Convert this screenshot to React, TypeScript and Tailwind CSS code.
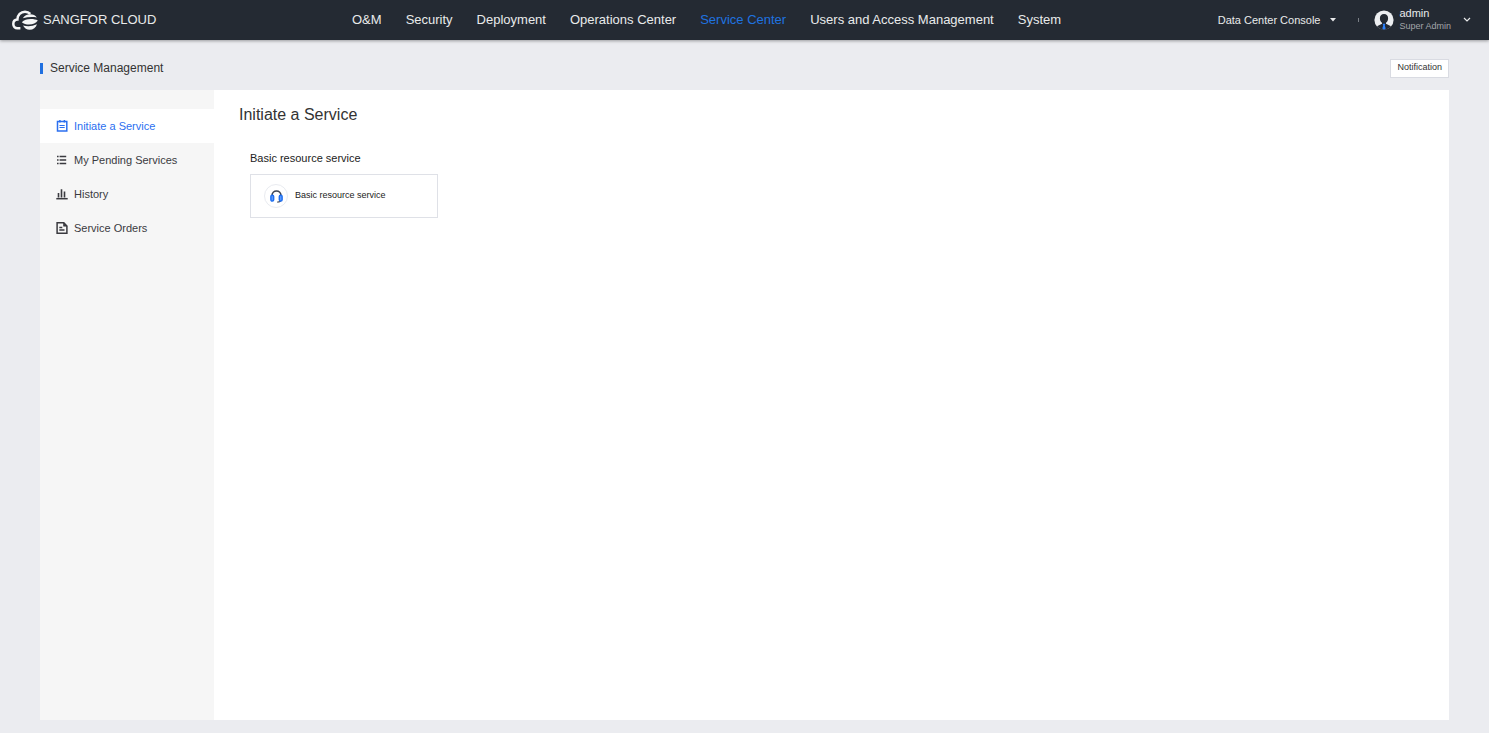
import { useState } from "react";
import type { ReactNode } from "react";
import clsx from "clsx";

const NAV_ITEMS = [
  "O&M",
  "Security",
  "Deployment",
  "Operations Center",
  "Service Center",
  "Users and Access Management",
  "System",
];

function CloudLogo() {
  return (
    <svg viewBox="0 0 26 20" className="h-5 w-[26px] shrink-0" fill="none">
      <path
        d="M8.400 18.200H5.400C3 18.200 1.300 16.500 1.300 14c0-2.400 1.600-4.200 4.100-4.400C5.400 4.900 8.800 1.700 13 1.700c2.200 0 4 .8 5.300 2.200"
        stroke="#f4f5f6"
        strokeWidth="2.500"
      />
      <path d="M10.800 8.300C12.400 5.700 15 4.300 18.200 4.300c2.900 0 5.200 1.100 6.600 3.100-4.500-.8-9.200-.5-14 .9Z" fill="#f4f5f6" />
      <path d="M9.800 12.200c2.200-2.200 5-3.200 9-3.200 3 0 5.300.5 7 1.500-1.800 2.600-4.800 4.100-8.800 4.100-2.900 0-5.300-.8-7.200-2.400Z" fill="#f4f5f6" />
      <path d="M11 15.500c4.500 1.200 9.300.9 14-1.200-1 3.500-3.800 5.500-7.400 5.500-2.800 0-5.100-1.500-6.600-4.300Z" fill="#f4f5f6" />
    </svg>
  );
}

function Avatar() {
  return (
    <svg viewBox="0 0 20 20" className="h-5 w-5 shrink-0">
      <circle cx="10" cy="10" r="9.600" fill="#eceef1" />
      <path
        d="M10 4C7.400 4 5.900 5.700 5.900 8.200c0 2 .8 3.600 2.100 4.500v1L3 16.200C4.700 18.300 7.200 19.700 10 19.700s5.300-1.400 7-3.500l-5-2.500v-1c1.300-.9 2.100-2.500 2.100-4.500C14.100 5.700 12.600 4 10 4Z"
        fill="#242a33"
      />
      <path d="M8.600 13.800h2.800l-.6 1.600.9 3-1.700 1.300-1.700-1.300.9-3Z" fill="#2b82ff" />
    </svg>
  );
}

function NoteIcon() {
  return (
    <svg viewBox="0 0 12 12" className="h-3 w-3" fill="none" stroke="currentColor">
      <path d="M1.500 1.500h9.300v9.600H1.500Z" strokeWidth="1.500" />
      <path d="M3.900 0v2.400M8.400 0v2.400" strokeWidth="1.500" />
      <path d="M3.500 5.500h5.200M3.500 7.500h5.200" strokeWidth="1.200" />
    </svg>
  );
}

function ListIcon() {
  return (
    <svg viewBox="0 0 12 12" className="h-3 w-3" fill="none" stroke="currentColor" strokeWidth="1.600">
      <path d="M1 2.500h1.600M1 6h1.600M1 9.500h1.600M3.600 2.500h6.600M3.600 6h6.600M3.600 9.500h6.600" />
    </svg>
  );
}

function ChartIcon() {
  return (
    <svg viewBox="0 0 12 12" className="h-3 w-3" fill="none" stroke="currentColor">
      <path d="M.3 10.700h11.400" strokeWidth="1.500" />
      <path d="M2.500 5v4.500M5.500 1.300v8.200M8.500 3.500v6" strokeWidth="1.600" />
    </svg>
  );
}

function OrderIcon() {
  return (
    <svg viewBox="0 0 12 12" className="h-3 w-3" fill="none" stroke="currentColor">
      <path d="M1.100.8h6.700l3.100 3.200v7.300H1.100Z" strokeWidth="1.500" />
      <path d="M7.500.8v3.400h3.300Z" fill="currentColor" strokeWidth=".600" />
      <path d="M3.300 5.500h3M3.300 8h5.200" strokeWidth="1.400" />
    </svg>
  );
}

function HeadsetIcon() {
  return (
    <svg viewBox="0 0 12 12" className="h-[13px] w-[13px]" fill="none">
      <path d="M1.900 5.500V5C1.900 2.600 3.700.9 6 .9s4.100 1.700 4.100 4.100v.5" stroke="#3c4353" strokeWidth="1.500" />
      <path d="M9.900 10c-.4.900-1.400 1.200-3.200 1.200" stroke="#3c4353" strokeWidth="1.200" />
      <rect x=".8" y="4.800" width="2.600" height="5.400" rx="1.200" fill="#5b9bff" stroke="#1f6ff0" strokeWidth="1.300" />
      <rect x="8.600" y="4.800" width="2.600" height="5.400" rx="1.200" fill="#5b9bff" stroke="#1f6ff0" strokeWidth="1.300" />
    </svg>
  );
}

const MENU: { label: string; icon: ReactNode }[] = [
  { label: "Initiate a Service", icon: <NoteIcon /> },
  { label: "My Pending Services", icon: <ListIcon /> },
  { label: "History", icon: <ChartIcon /> },
  { label: "Service Orders", icon: <OrderIcon /> },
];

function TopBar() {
  return (
    <header className="flex h-10 shrink-0 items-center bg-[#242a33] text-[#e9eaeb] shadow-[0_1px_3px_rgba(0,0,0,0.35)]">
      <a href="#home" className="flex w-[352px] shrink-0 items-center gap-[5px] pl-3 text-[13px]">
        <CloudLogo />
        <span>SANGFOR CLOUD</span>
      </a>
      <nav className="flex items-center gap-6 whitespace-nowrap text-[13px]">
        {NAV_ITEMS.map((item) => (
          <a
            key={item}
            href="#nav"
            className={item === "Service Center" ? "text-[#1f73e0]" : "hover:text-white"}
          >
            {item}
          </a>
        ))}
      </nav>
      <div className="ml-auto flex items-center whitespace-nowrap pr-[18px]">
        <button className="flex items-center gap-[10px] text-[11px]">
          Data Center Console
          <svg viewBox="0 0 6 4" className="h-1 w-[6px]">
            <path d="M0 0h6L3 3.500Z" fill="currentColor" />
          </svg>
        </button>
        <span className="ml-[22px] mr-[15px] h-1 w-px bg-[#7b8087]" />
        <button className="flex items-center text-left">
          <Avatar />
          <span className="ml-[5px] flex flex-col">
            <span className="text-[11px] leading-[13px]">admin</span>
            <span className="text-[9px] leading-[13px] text-[#a3a6aa]">Super Admin</span>
          </span>
          <svg viewBox="0 0 8 6" className="ml-3 h-[6px] w-2" fill="none">
            <path d="M1 1l3 3 3-3" stroke="currentColor" strokeWidth="1.200" />
          </svg>
        </button>
      </div>
    </header>
  );
}

export default function App() {
  const [active, setActive] = useState(MENU[0].label);

  return (
    <div className="flex min-h-screen flex-col bg-[#ebecf0] font-['Liberation_Sans',Arial,sans-serif] text-[#333]">
      <TopBar />
      <div className="flex h-[50px] shrink-0 items-center justify-between px-10 pb-[5px] pt-[11px]">
        <div className="flex items-center gap-[7px]">
          <span className="h-[11px] w-[3px] bg-[#1f6fe0]" />
          <h1 className="text-[12px]">Service Management</h1>
        </div>
        <button className="h-[19px] border border-[#d9dbe2] bg-white px-[6px] text-[9px]">
          Notification
        </button>
      </div>

      <div className="mx-10 mb-[13px] flex flex-1 bg-white">
        <aside className="w-[174px] shrink-0 bg-[#f6f6f6] pt-[19px]">
          <nav>
            {MENU.map((item) => (
              <button
                key={item.label}
                onClick={() => setActive(item.label)}
                className={clsx(
                  "flex h-[34px] w-full items-center gap-[6px] pl-4 text-[11px]",
                  item.label === active ? "bg-white text-[#2b6ff0]" : "text-[#3a3a3f] hover:bg-white/60"
                )}
              >
                {item.icon}
                {item.label}
              </button>
            ))}
          </nav>
        </aside>

        <main className="flex-1 px-[25px] pt-[13px]">
          <h2 className="text-[16px] leading-6">Initiate a Service</h2>
          <section className="ml-[11px] mt-[22px]">
            <h3 className="text-[11px] leading-[18px] text-[#222]">Basic resource service</h3>
            <button className="mt-[7px] flex h-[44px] w-[188px] items-center gap-[7px] border border-[#dfe1e7] pl-[13px] text-[9px] text-[#222]">
              <span className="flex h-6 w-6 items-center justify-center rounded-full border border-[#e9ebf0]">
                <HeadsetIcon />
              </span>
              Basic resource service
            </button>
          </section>
        </main>
      </div>
    </div>
  );
}
